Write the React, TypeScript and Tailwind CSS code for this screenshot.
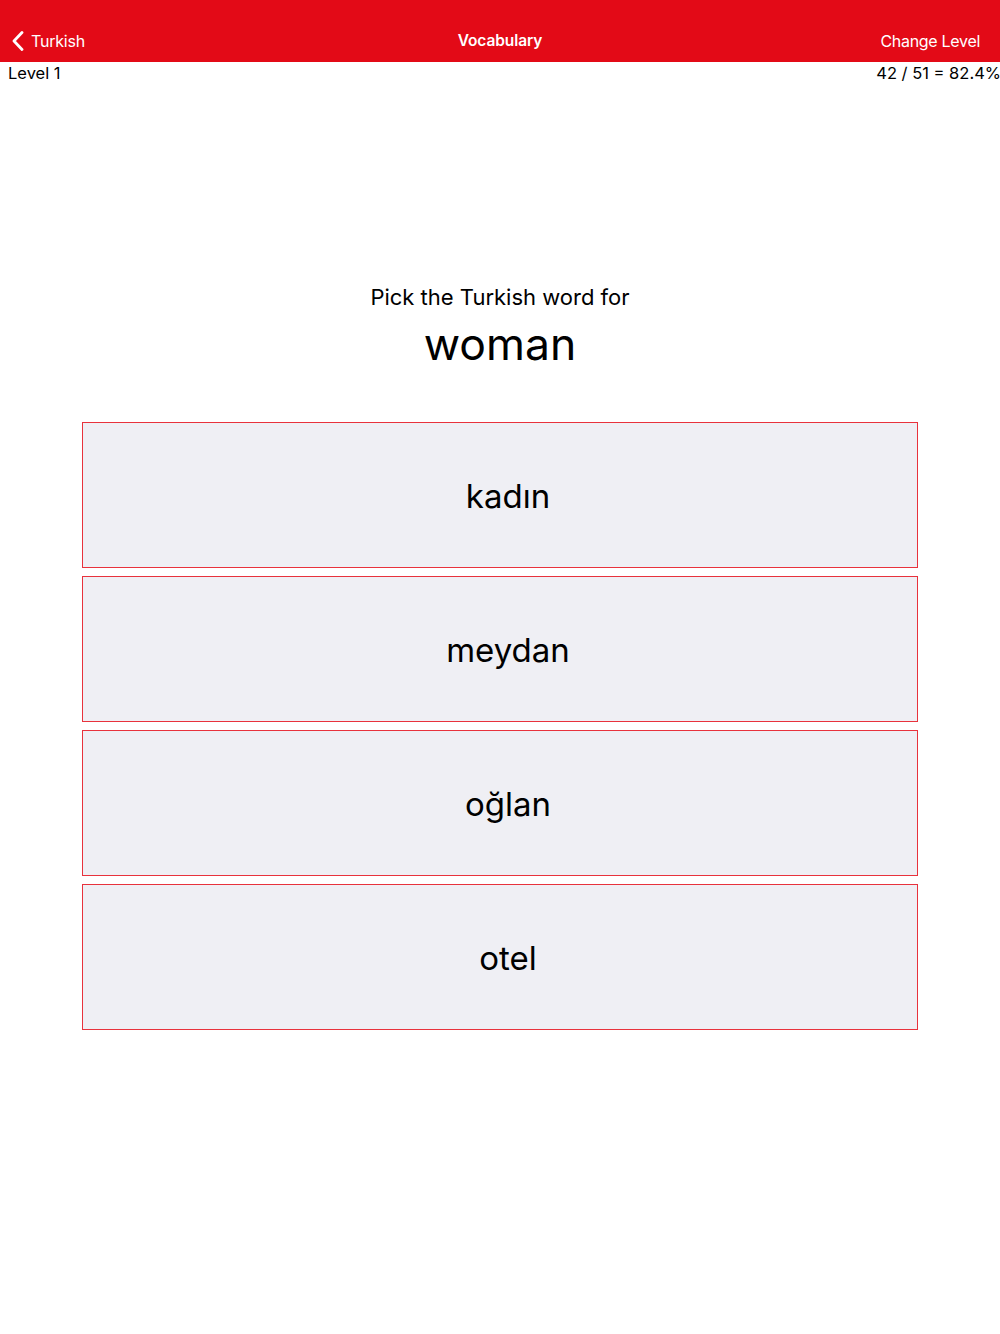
const choices = ["kadın", "meydan", "oğlan", "otel"];

export default function App() {
  return (
    <div className="min-h-[1334px] bg-white text-black" style={{ fontFamily: "Inter, 'Noto Sans', sans-serif" }}>
      <header className="flex h-[62px] items-end bg-[#e30a17] pb-[10px] text-white">
        <div className="flex w-[200px] items-center pl-[11px]">
          <svg width="14" height="20" viewBox="0 0 14 20" fill="none">
            <path d="M11 1.5 L3 10 L11 18.5" stroke="white" strokeWidth="2.8" strokeLinecap="round" strokeLinejoin="round" />
          </svg>
          <span className="ml-[6px] text-[16px] leading-[22px] tracking-[-0.2px]">Turkish</span>
        </div>
        <div className="flex-1 text-center text-[15.5px] font-semibold leading-[22px] tracking-[-0.1px]">Vocabulary</div>
        <div className="w-[200px] pr-[20px] text-right text-[16px] leading-[22px] tracking-[-0.3px]">Change Level</div>
      </header>

      <div className="flex items-start justify-between pl-[8px] text-[16.5px] leading-[22px]">
        <span>Level 1</span>
        <span className="-mr-[1px]">42 / 51 = 82.4%</span>
      </div>

      <main className="flex flex-col items-center pt-[199px]">
        <p className="text-[22px] leading-[28px]">Pick the Turkish word for</p>
        <h1 className="mt-[6px] text-[44.5px] leading-[54px]">woman</h1>

        <div className="mt-[51px] flex w-[836px] flex-col gap-[8px]">
          {choices.map((c) => (
            <button
              key={c}
              className="flex h-[146px] items-center justify-center border border-[#e8323c] bg-[#efeff4] pl-[16px] pt-[3px] text-[33px]"
            >
              {c}
            </button>
          ))}
        </div>
      </main>
    </div>
  );
}
